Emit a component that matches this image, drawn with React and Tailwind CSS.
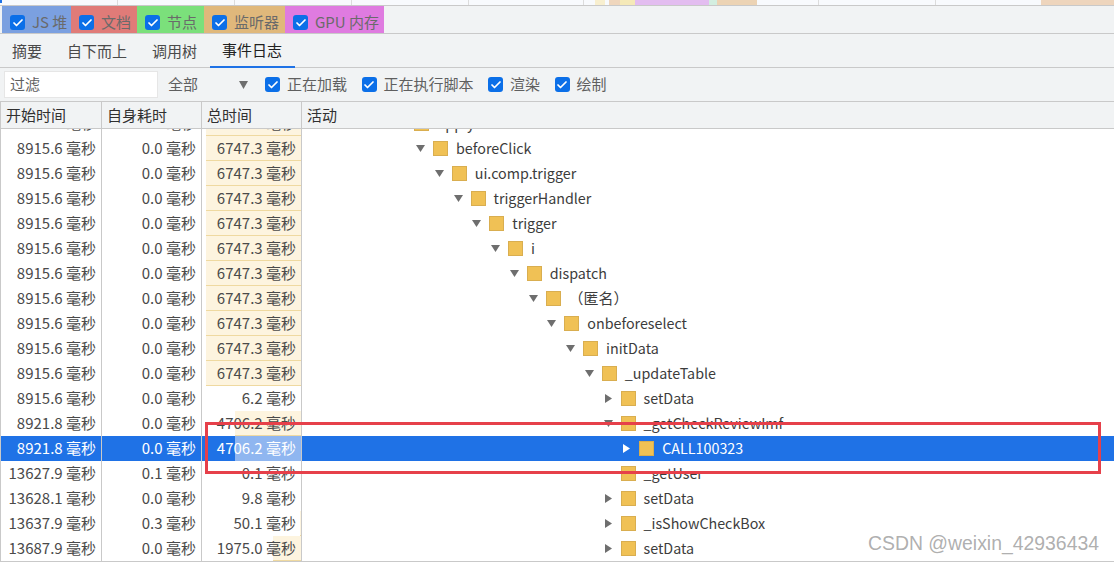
import React from "react";
import { Check } from "lucide-react";

const FONT = "font-['Noto_Sans_CJK_SC','Open_Sans',sans-serif]";

// legend chips above the tabs
const legend = [
  { label: "JS 堆", cls: "bg-[#7ba0e0] w-[69px]" },
  { label: "文档", cls: "bg-[#e07b78] w-[66px]" },
  { label: "节点", cls: "bg-[#7be07b] w-[67px]" },
  { label: "监听器", cls: "bg-[#e0b87b] w-[81px]" },
  { label: "GPU 内存", cls: "bg-[#df7be0] w-[99px]" },
];

const tabs = ["摘要", "自下而上", "调用树", "事件日志"];
const filters = ["正在加载", "正在执行脚本", "渲染", "绘制"];

// start, self, total, bar width in total cell, tree indent, arrow, name
const rows = [
  ["8915.6", "0.0", "6747.3", 95, 0, "down", "beforeClick"],
  ["8915.6", "0.0", "6747.3", 95, 1, "down", "ui.comp.trigger"],
  ["8915.6", "0.0", "6747.3", 95, 2, "down", "triggerHandler"],
  ["8915.6", "0.0", "6747.3", 95, 3, "down", "trigger"],
  ["8915.6", "0.0", "6747.3", 95, 4, "down", "i"],
  ["8915.6", "0.0", "6747.3", 95, 5, "down", "dispatch"],
  ["8915.6", "0.0", "6747.3", 95, 6, "down", "（匿名）"],
  ["8915.6", "0.0", "6747.3", 95, 7, "down", "onbeforeselect"],
  ["8915.6", "0.0", "6747.3", 95, 8, "down", "initData"],
  ["8915.6", "0.0", "6747.3", 95, 9, "down", "_updateTable"],
  ["8915.6", "0.0", "6.2", 0, 10, "right", "setData"],
  ["8921.8", "0.0", "4706.2", 66, 10, "down", "_getCheckReviewImf"],
  ["8921.8", "0.0", "4706.2", 66, 11, "right", "CALL100323", true],
  ["13627.9", "0.1", "0.1", 0, 10, "none", "_getUser"],
  ["13628.1", "0.0", "9.8", 0, 10, "right", "setData"],
  ["13637.9", "0.3", "50.1", 1, 10, "right", "_isShowCheckBox"],
  ["13687.9", "0.0", "1975.0", 28, 10, "right", "setData"],
];

function Box() {
  return (
    <span className="flex h-[15px] w-[15px] shrink-0 items-center justify-center rounded-[3px] bg-[#0b6fe8]">
      <Check size={12} strokeWidth={3.5} className="text-white" />
    </span>
  );
}

function Arrow({ dir, selected }) {
  const color = selected ? "fill-white" : "fill-[#6e6e6e]";
  return (
    <svg width="9" height="9" viewBox="0 0 9 9" className="shrink-0">
      {dir === "down" && <path d="M0 1h9L4.5 8z" className={color} />}
      {dir === "right" && <path d="M1 0v9L8 4.5z" className={color} />}
    </svg>
  );
}

function Row({ row }) {
  const [start, self, total, bar, indent, dir, name, selected] = row;
  const text = selected ? "text-white" : "text-[#4a4a4a]";
  const barColor = selected ? "bg-[#8fb6f0]" : "bg-[#fdf4df] border-b border-[#efd9a0]";
  const nameSize = /[^\x00-\x7f]/.test(name) ? "text-[15px]" : "text-[14.3px]";
  return (
    <div className={"flex h-[25px] shrink-0 text-[15px] leading-[23px] " + text + (selected ? " bg-[#1f72e6]" : "")}>
      <div className="w-[102px] shrink-0 border-r border-l border-[#c9c9c9] pr-[5px] text-right">{start} 毫秒</div>
      <div className="w-[100px] shrink-0 border-r border-[#c9c9c9] pr-[5px] text-right">{self} 毫秒</div>
      <div className="relative w-[100px] shrink-0 border-r border-[#c9c9c9] pr-[5px] text-right">
        {bar > 0 && <div className={"absolute top-0 right-0 bottom-0 " + barColor} style={{ width: bar }} />}
        <span className="relative">{total} 毫秒</span>
      </div>
      <div className="flex min-w-0 flex-1 items-center" style={{ paddingLeft: 114 + indent * 18.75 }}>
        <span className="flex w-[17px] shrink-0 items-center"><Arrow dir={dir} selected={selected} /></span>
        <span className="mr-[8px] h-[15px] w-[15px] shrink-0 border border-[#d9ae50] bg-[#f0c155]" />
        <span className={"mb-[2px] whitespace-nowrap " + nameSize + (selected ? " text-white" : " text-[#3c3c3c]")}>{name}</span>
      </div>
    </div>
  );
}

export default function App() {
  return (
    <div className={"relative h-[562px] w-[1114px] overflow-hidden bg-white " + FONT}>
      {/* clipped timeline strip */}
      <div className="flex h-[6px] border-b border-[#c9c9c9] bg-[#f8fafd]">
        <div className="h-[3px] w-[2px] bg-[#1f72e6]" />
        <div className="w-[116px] border-r border-[#dcdcdc]" />
        <div className="w-[117px] border-r border-[#dcdcdc]" />
        <div className="w-[117px] border-r border-[#dcdcdc]" />
        <div className="w-[117px] border-r border-[#dcdcdc]" />
        <div className="w-[115px] border-r border-[#dcdcdc]" />
        <div className="w-[11px]" />
        <div className="w-[10px] bg-[#f8efcf]" />
        <div className="w-[4px]" />
        <div className="w-[11px] bg-[#efd6bd]" />
        <div className="w-[15px] bg-[#f5e9b8]" />
        <div className="w-[74px] bg-[#e3bdf0]" />
        <div className="w-[8px] bg-[#d3eee0]" />
        <div className="w-[40px] bg-[#ecd3b4]" />
        <div className="w-[62px] border-r border-[#dcdcdc]" />
        <div className="w-[117px] border-r border-[#dcdcdc]" />
        <div className="w-[105px]" />
        <div className="flex-1 bg-[#eed5bd]" />
      </div>

      {/* legend */}
      <div className="flex h-[28px] border-b border-[#c9c9c9] bg-[#f1f3f4] pl-[2px]">
        {legend.map((l) => (
          <div key={l.label} className={"flex items-center pt-[6px] pl-[8px] text-[15px] text-[#6a6a6a] " + l.cls}>
            <Box />
            <span className="ml-[7px] whitespace-nowrap">{l.label}</span>
          </div>
        ))}
      </div>

      {/* tabs */}
      <div className="flex h-[34px] border-b border-[#c9c9c9] bg-[#f1f3f4] text-[15px] text-[#4a4a4a]">
        {tabs.map((t, i) => (
          <div key={t} className={"-mb-px flex items-center pr-[13px] pl-[12px] " + (i === 3 ? "border-b-2 border-[#1f72e6] text-[#202020]" : "")}>{t}</div>
        ))}
      </div>

      {/* toolbar */}
      <div className="flex h-[34px] items-center border-b border-[#c9c9c9] bg-[#f1f3f4] pl-[5px] text-[15px] text-[#5f5f5f]">
        <div className="flex h-[25px] w-[152px] items-center bg-white pl-[5px] shadow-[0_0_0_1px_#e6e6e6]">过滤</div>
        <div className="ml-[11px] flex w-[80px] items-center justify-between">
          <span>全部</span>
          <svg width="9" height="8" viewBox="0 0 9 8"><path d="M0 0h9L4.5 8z" className="fill-[#6e6e6e]" /></svg>
        </div>
        <div className="ml-[17px] flex items-center gap-[14.5px]">
          {filters.map((f) => (
            <div key={f} className="flex items-center gap-[7px]">
              <Box />
              <span>{f}</span>
            </div>
          ))}
        </div>
      </div>

      {/* table header */}
      <div className="flex h-[27px] border-b border-[#c9c9c9] bg-[#f1f3f4] text-[15px] leading-[25px] text-[#303030]">
        <div className="w-[102px] shrink-0 border-r border-l border-[#c9c9c9] pl-[5px]">开始时间</div>
        <div className="w-[100px] shrink-0 border-r border-[#c9c9c9] pl-[5px]">自身耗时</div>
        <div className="w-[100px] shrink-0 border-r border-[#c9c9c9] pl-[5px]">总时间</div>
        <div className="pl-[5px]">活动</div>
      </div>

      {/* row scrolled mostly out of view */}
      <div className="flex h-[7px] flex-col justify-end overflow-hidden">
        <Row row={["8915.6", "0.0", "6747.3", 95, -1, "none", "apply"]} />
      </div>

      {rows.map((r, i) => (
        <Row key={i} row={r} />
      ))}
      <div className="h-px bg-[#c9c9c9]" />

      {/* red annotation rectangle */}
      <div className="absolute top-[422px] left-[205px] h-[52px] w-[896px] border-[3px] border-[#e6404a]" />
      <div className="absolute right-[15px] bottom-[9px] font-['Liberation_Sans',sans-serif] text-[19.4px] leading-none text-[#9a9a9a]/80">CSDN @weixin_42936434</div>
    </div>
  );
}
